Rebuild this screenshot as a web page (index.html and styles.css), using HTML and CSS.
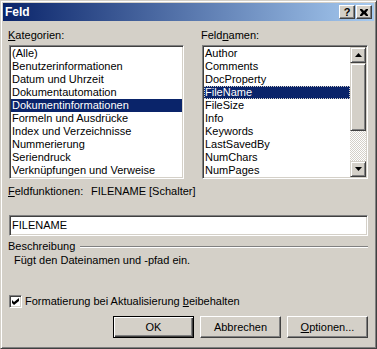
FILE: index.html
```html
<!DOCTYPE html>
<html lang="de">
<head>
	<meta charset="UTF-8">
	<title>Feld</title>
	<link rel="stylesheet" href="styles.css">
</head>
<body>

<div class="window">
	<div class="titlebar">
		<span class="title">Feld</span>
		<div class="caption-buttons">
			<span class="cap-btn help">?</span>
			<span class="cap-btn close">
				<svg width="8" height="7" viewBox="0 0 8 7"><path d="M0 0h2l2 2 2-2h2v1l-2 2.5 2 2.5v1h-2l-2-2-2 2h-2v-1l2-2.5-2-2.5z" fill="#000"/></svg>
			</span>
		</div>
	</div>

	<div class="content">
		<div class="lists">
			<div class="col">
				<div class="label"><u>K</u>ategorien:</div>
				<ul class="listbox categories">
					<li>(Alle)</li>
					<li>Benutzerinformationen</li>
					<li>Datum und Uhrzeit</li>
					<li>Dokumentautomation</li>
					<li class="selected">Dokumentinformationen</li>
					<li>Formeln und Ausdrücke</li>
					<li>Index und Verzeichnisse</li>
					<li>Nummerierung</li>
					<li>Seriendruck</li>
					<li>Verknüpfungen und Verweise</li>
				</ul>
			</div>
			<div class="col">
				<div class="label">Feld<u>n</u>amen:</div>
				<div class="listbox fields">
					<ul class="items">
						<li>Author</li>
						<li>Comments</li>
						<li>DocProperty</li>
						<li class="selected focused">FileName</li>
						<li>FileSize</li>
						<li>Info</li>
						<li>Keywords</li>
						<li>LastSavedBy</li>
						<li>NumChars</li>
						<li>NumPages</li>
					</ul>
					<div class="scrollbar">
						<span class="scroll-btn">
							<svg width="7" height="4" viewBox="0 0 7 4"><path d="M3.5 0L7 4H0z" fill="#000"/></svg>
						</span>
						<span class="thumb"></span>
						<span class="track"></span>
						<span class="scroll-btn">
							<svg width="7" height="4" viewBox="0 0 7 4"><path d="M0 0h7L3.5 4z" fill="#000"/></svg>
						</span>
					</div>
				</div>
			</div>
		</div>

		<div class="codes-row">
			<span class="codes-label"><u>F</u>eldfunktionen:</span>
			<span>FILENAME [Schalter]</span>
		</div>

		<div class="textfield">FILENAME</div>

		<div class="group-title">
			<span>Beschreibung</span>
			<span class="etched"></span>
		</div>
		<div class="description">Fügt den Dateinamen und -pfad ein.</div>

		<div class="check-row">
			<span class="checkbox">
				<svg width="7" height="7" viewBox="0 0 7 7"><path d="M0 2l2 2 5-4v3l-5 4-2-2z" fill="#000"/></svg>
			</span>
			<span>Formatierung bei Aktualisierung <u>b</u>eibehalten</span>
		</div>

		<div class="buttons">
			<span class="btn default">OK</span>
			<span class="btn">Abbrechen</span>
			<span class="btn"><u>O</u>ptionen...</span>
		</div>
	</div>
</div>

</body>
</html>
```

FILE: styles.css
```css
html,
body {
    margin: 0;
    background: #d4d0c8;
    font-family: "Liberation Sans", Arial, sans-serif;
    font-size: 11px;
    line-height: 13px;
    color: #000;
}
ul {
    list-style: none;
    margin: 0;
    padding: 0;
}
u {
    text-decoration: underline;
    text-underline-offset: 1px;
}

.window {
    width: 377px;
    height: 349px;
    box-sizing: border-box;
    padding: 2px;
    border: 1px solid;
    border-color: #d4d0c8 #404040 #404040 #d4d0c8;
    box-shadow: inset 1px 1px 0 #fff, inset -1px -1px 0 #808080;
}

/* Titelleiste */
.titlebar {
    height: 18px;
    display: flex;
    align-items: center;
    justify-content: space-between;
    padding-left: 2px;
    background: linear-gradient(to right, #0a246a, #a6caf0);
}
.title {
    color: #fff;
    font-weight: bold;
    font-size: 12px;
}
.caption-buttons {
    display: flex;
    gap: 1px;
    margin-right: 2px;
}
.cap-btn {
    width: 16px;
    height: 14px;
    box-sizing: border-box;
    display: flex;
    align-items: center;
    justify-content: center;
    background: #d4d0c8;
    border: 1px solid;
    border-color: #fff #404040 #404040 #fff;
    box-shadow: inset -1px -1px 0 #808080;
}
.help {
    font-weight: bold;
    font-size: 11px;
    line-height: 11px;
}

/* Inhalt */
.content {
    padding: 8px 6px 0 5px;
}
.lists {
    display: grid;
    grid-template-columns: 176px 1fr;
    column-gap: 17px;
}
.label {
    height: 13px;
}
.listbox {
    margin: 3px 0 0 1px;
    height: 134px;
    box-sizing: border-box;
    padding: 1px;
    background: #fff;
    border: 1px solid;
    border-color: #808080 #fff #fff #808080;
    box-shadow: inset 1px 1px 0 #404040, inset -1px -1px 0 #d4d0c8;
}
.listbox li {
    height: 13px;
    padding-left: 1px;
    white-space: nowrap;
}
.listbox li.selected {
    background: #0a246a;
    color: #fff;
}
.listbox li.focused {
    outline: 1px dotted #d4d0c8;
    outline-offset: -1px;
}
.fields {
    display: flex;
}
.fields .items {
    flex: 1;
}

.scrollbar {
    width: 16px;
    display: flex;
    flex-direction: column;
}
.scroll-btn,
.thumb {
    box-sizing: border-box;
    background: #d4d0c8;
    border: 1px solid;
    border-color: #d4d0c8 #404040 #404040 #d4d0c8;
    box-shadow: inset 1px 1px 0 #fff, inset -1px -1px 0 #808080;
}
.scroll-btn {
    height: 16px;
    display: flex;
    align-items: center;
    justify-content: center;
}
.thumb {
    height: 68px;
}
.track {
    flex: 1;
    background: repeating-conic-gradient(#d4d0c8 0 25%, #fff 0 50%) 0 0 / 2px 2px;
}

.codes-row {
    display: flex;
    margin-top: 6px;
}
.codes-label {
    width: 83px;
}

.textfield {
    margin: 17px 0 0 1px;
    height: 21px;
    box-sizing: border-box;
    padding: 1px 2px;
    line-height: 17px;
    background: #fff;
    border: 1px solid;
    border-color: #808080 #fff #fff #808080;
    box-shadow: inset 1px 1px 0 #404040, inset -1px -1px 0 #d4d0c8;
}

.group-title {
    display: flex;
    align-items: center;
    margin-top: 4px;
}
.etched {
    flex: 1;
    margin-left: 5px;
    border-top: 1px solid #808080;
    border-bottom: 1px solid #fff;
}
.description {
    margin-top: 1px;
    padding-left: 6px;
}

.check-row {
    display: flex;
    align-items: center;
    gap: 3px;
    margin: 28px 0 0 1px;
}
.checkbox {
    width: 13px;
    height: 13px;
    box-sizing: border-box;
    display: flex;
    align-items: center;
    justify-content: center;
    background: #fff;
    border: 1px solid;
    border-color: #808080 #fff #fff #808080;
    box-shadow: inset 1px 1px 0 #404040, inset -1px -1px 0 #d4d0c8;
}

.buttons {
    display: flex;
    justify-content: flex-end;
    gap: 6px;
    margin-top: 8px;
}
.btn {
    width: 81px;
    height: 22px;
    box-sizing: border-box;
    display: flex;
    align-items: center;
    justify-content: center;
    border: 1px solid;
    border-color: #fff #404040 #404040 #fff;
    box-shadow: inset -1px -1px 0 #808080;
}
.btn.default {
    border: 1px solid #000;
    box-shadow: inset 1px 1px 0 #fff, inset -1px -1px 0 #404040, inset -2px -2px 0 #808080;
}
```
